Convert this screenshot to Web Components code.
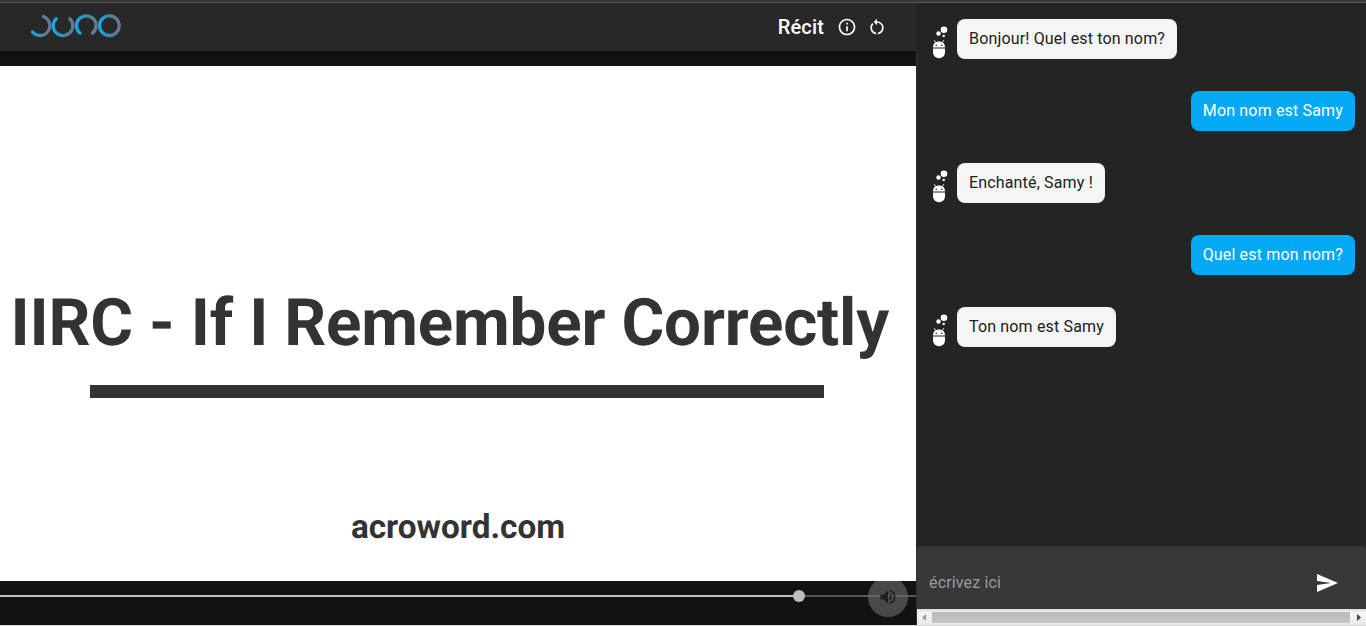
<!DOCTYPE html>
<html lang="fr">
<head>
<meta charset="utf-8">
<title>Juno</title>
<style>
html,body{margin:0;height:100%;overflow:hidden;background:#121212}
body{font-family:Roboto,"Open Sans",sans-serif;font-size:16px;color:#fff}
</style>
</head>
<body>
<juno-app></juno-app>
<script>
class Base extends HTMLElement {
  constructor(){
    super();
    const t=document.createElement('template');
    t.innerHTML='<style>*{box-sizing:border-box}svg{display:block}'+this.constructor.css+'</style>'+this.constructor.html;
    this.attachShadow({mode:'open'}).append(t.content.cloneNode(true));
  }
}
const define=(name,css,html)=>customElements.define(name,class extends Base{static css=css;static html=html});

define('juno-logo',':host{display:block;width:92px;height:24px}',`
<svg width="92" height="24" viewBox="0 0 92 24" fill="none" stroke-width="3.3" stroke-linecap="round">
<defs>
<linearGradient id="a" gradientUnits="userSpaceOnUse" x1="0" y1="0" x2="21" y2="0"><stop offset="0" stop-color="#0fb0ee"/><stop offset=".4" stop-color="#2b92bf"/><stop offset=".85" stop-color="#657a8e"/></linearGradient>
<linearGradient id="b" gradientUnits="userSpaceOnUse" x1="22" y1="0" x2="44" y2="0"><stop offset="0" stop-color="#0fb0ee"/><stop offset=".4" stop-color="#2b92bf"/><stop offset=".85" stop-color="#657a8e"/></linearGradient>
<linearGradient id="c" gradientUnits="userSpaceOnUse" x1="45" y1="0" x2="67" y2="0"><stop offset="0" stop-color="#0fb0ee"/><stop offset=".4" stop-color="#2b92bf"/><stop offset=".85" stop-color="#657a8e"/></linearGradient>
<linearGradient id="d" gradientUnits="userSpaceOnUse" x1="68" y1="0" x2="90" y2="0"><stop offset="0" stop-color="#0fb0ee"/><stop offset=".4" stop-color="#2b92bf"/><stop offset=".75" stop-color="#657a8e"/></linearGradient>
</defs>
<path stroke="url(#a)" d="M13.4 2.500A9.800 9.800 0 1 1 2.500 18"/>
<path stroke="url(#b)" d="M26.200 4.700A9.800 9.800 0 1 0 39.800 4.700"/>
<path stroke="url(#c)" d="M50.200 19.300A9.800 9.800 0 1 1 62.400 19.300"/>
<circle stroke="url(#d)" cx="79.400" cy="11.700" r="9.800"/>
</svg>`);

define('info-icon',':host{display:block}',`<svg width="20" height="20" viewBox="0 0 24 24" fill="#fff"><path d="M11 17h2v-6h-2v6zm1-15C6.48 2 2 6.48 2 12s4.48 10 10 10 10-4.48 10-10S17.52 2 12 2zm0 18c-4.41 0-8-3.59-8-8s3.59-8 8-8 8 3.59 8 8-3.59 8-8 8zM11 9h2V7h-2v2z"/></svg>`);
define('replay-icon',':host{display:block}',`<svg width="20" height="20" viewBox="0 0 24 24" fill="#fff"><path d="M12 5V2L8 6l4 4V7c3.310 0 6 2.690 6 6 0 2.970-2.170 5.430-5 5.910v2.020c3.950-.49 7-3.850 7-7.930 0-4.420-3.580-8-8-8z"/><path d="M6 13c0-1.650.67-3.150 1.760-4.240L6.340 7.340C4.900 8.790 4 10.790 4 13c0 4.080 3.050 7.440 7 7.930v-2.020C8.170 18.430 6 15.970 6 13z"/></svg>`);

define('app-bar',`:host{display:flex;align-items:center;height:48px;padding:0 29px 0 30px;background:#282828;box-shadow:0 1px 4px #0005;position:relative}
h1{margin:0 13px 0 auto;font-size:20px;font-weight:500;line-height:24px;letter-spacing:.15px}
info-icon{margin-right:10px}juno-logo{margin-top:-2px}`,
`<juno-logo></juno-logo><h1>Récit</h1><info-icon></info-icon><replay-icon></replay-icon>`);

define('video-slide',`:host{display:flex;flex-direction:column;height:515px;margin-top:15px;background:#fff;color:#333;overflow:hidden}
h2{margin:218px 0 0 10.5px;font-size:65.5px;line-height:77px;font-weight:700;white-space:nowrap;letter-spacing:-.17px;text-rendering:geometricPrecision}
hr{border:0;margin:24px 0 0 90px;width:734px;height:13px;background:#333;flex:none}
p{margin:110px 0 0;font-size:33.3px;line-height:40px;font-weight:700;text-align:center;text-rendering:geometricPrecision}`,
`<h2>IIRC - If I Remember Correctly</h2><hr><p>acroword.com</p>`);

define('video-controls',`:host{display:grid;height:44px;grid-template-columns:1fr;align-items:start}
.track{grid-area:1/1;margin-top:14px;height:2px;background:#555}
.track div{width:799px;height:2px;background:#bdbdbd}
.knob,button{grid-area:1/1}
.knob{margin:9px 0 0 793px;width:12px;height:12px;border-radius:50%;background:#bdbdbd}
button{position:relative;margin:-4px 0 0 868px;width:40px;height:40px;border:0;border-radius:50%;padding:10px;background:linear-gradient(#0000 4px,#70707094 4px)}`,
`<div class="track"><div></div></div><div class="knob"></div>
<button aria-label="Volume"><svg width="20" height="20" viewBox="0 0 24 24" fill="#202020"><path d="M3 9v6h4l5 5V4L7 9H3zm13.500 3c0-1.770-1.020-3.290-2.500-4.030v8.050c1.480-.73 2.500-2.250 2.500-4.020zM14 3.230v2.060c2.890.86 5 3.540 5 6.710s-2.110 5.850-5 6.710v2.060c4.010-.91 7-4.490 7-8.770s-2.990-7.860-7-8.770z"/></svg></button>`);

define('bot-avatar',':host{display:block;width:18px;height:34px}',`<svg width="18" height="34" viewBox="0 0 18 34" fill="#fff">
<circle cx="12" cy="4.700" r="3.300"/><circle cx="6.500" cy="8.500" r="2.200"/><circle cx="11.700" cy="10.900" r="1.200"/>
<path d="M2.300 15.300 3.700 17.500M11.700 15.300 10.300 17.500" stroke="#fff" stroke-width="1"/>
<path d="M1 22.500C1 18.500 3.500 16.500 7 16.500s6 2 6 6z"/><path d="M1 23.400h12v4a6 5.800 0 0 1-12 0z"/>
<circle cx="4.300" cy="20.300" r=".8" fill="#222"/><circle cx="9.700" cy="20.300" r=".8" fill="#222"/></svg>`);
define('chat-bubble',`:host{display:block;height:40px;line-height:24px;padding:8px 12px;border-radius:8px;background:#f5f5f5;color:#212121;white-space:nowrap;letter-spacing:.16px}
:host([mine]){background:#03a9f4;color:#fff}`,`<slot></slot>`);
define('bot-message',`:host{display:flex;align-items:flex-start}bot-avatar{margin:6px 7px 0 1px}`,`<bot-avatar></bot-avatar><chat-bubble><slot></slot></chat-bubble>`);
define('user-message',`:host{display:flex;justify-content:flex-end}`,`<chat-bubble mine><slot></slot></chat-bubble>`);

define('chat-input',`:host{display:flex;align-items:center;justify-content:space-between;height:63px;padding:10px 26px 0 12px;background:#383838;color:#9b9b9b;border-radius:4px 4px 0 0;letter-spacing:.16px}`,
`<span>écrivez ici</span><svg width="26" height="24" viewBox="0 0 26 24" fill="#fff"><path d="M3 21 24 12 3 3v7l14 2-14 2z"/></svg>`);
define('scroll-strip',`:host{display:flex;align-items:center;height:16px;background:linear-gradient(#e2e2e2,#f6f6f6 3px,#e9e9e9);border-top:1px solid #ddd}
.thumb{flex:1;height:11px;background:linear-gradient(#bababa,#c5c5c5)}svg{width:15px;height:15px}svg:last-child{width:16px}`,
`<svg viewBox="0 0 15 15"><path d="M9 4v7L5 7.500z" fill="#999"/></svg><div class="thumb"></div><svg viewBox="0 0 16 15"><path d="M7 4v7l4-3.500z" fill="#444"/></svg>`);

define('chat-panel',`:host{display:flex;flex-direction:column;border-left:1px solid #303030;background:#242424}
.log{flex:1;display:flex;flex-direction:column;gap:32px;padding:16px 11px 0 14px}`,
`<div class="log"><bot-message>Bonjour! Quel est ton nom?</bot-message><user-message>Mon nom est Samy</user-message><bot-message>Enchanté, Samy !</bot-message><user-message>Quel est mon nom?</user-message><bot-message>Ton nom est Samy</bot-message></div><chat-input></chat-input><scroll-strip></scroll-strip>`);

define('juno-app',`:host{display:grid;width:1366px;height:626px;grid-template:3px 622px 1px/916px 450px;background:#121212}
.top{grid-column:1/3;background:#38383c;border-bottom:1px solid #5e5e62}
.foot{grid-column:1/3;background:#d8d4d4}`,
`<div class="top"></div><main><app-bar></app-bar><video-slide></video-slide><video-controls></video-controls></main><chat-panel></chat-panel><div class="foot"></div>`);
</script>
</body>
</html>
